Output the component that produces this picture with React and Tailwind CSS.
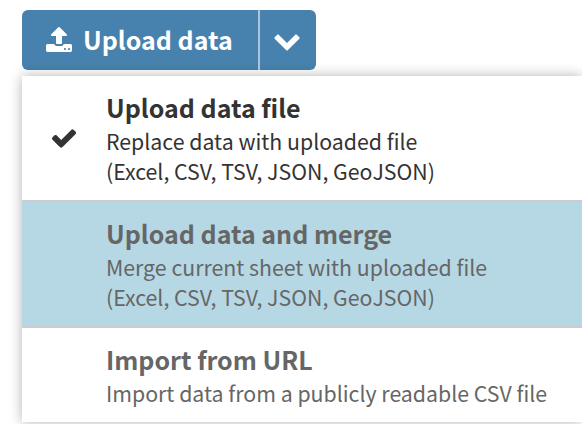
const items = [
  {
    title: "Upload data file",
    lines: ["Replace data with uploaded file", "(Excel, CSV, TSV, JSON, GeoJSON)"],
    selected: true,
  },
  {
    title: "Upload data and merge",
    lines: ["Merge current sheet with uploaded file", "(Excel, CSV, TSV, JSON, GeoJSON)"],
    hovered: true,
  },
  {
    title: "Import from URL",
    lines: ["Import data from a publicly readable CSV file"],
  },
];

function Icon({ d, className }) {
  return (
    <svg
      xmlns="http://www.w3.org/2000/svg"
      className={`size-7 shrink-0 ${className}`}
      viewBox="0 0 1792 1792"
      fill="currentColor"
      aria-hidden="true"
    >
      <path d={d} />
    </svg>
  );
}

const uploadPath =
  "M1280 1472q0-26-19-45t-45-19-45 19-19 45 19 45 45 19 45-19 19-45zm256 0q0-26-19-45t-45-19-45 19-19 45 19 45 45 19 45-19 19-45zm128-224v320q0 40-28 68t-68 28h-1472q-40 0-68-28t-28-68v-320q0-40 28-68t68-28h427q21 56 70.5 92t110.5 36h256q61 0 110.5-36t70.5-92h427q40 0 68 28t28 68zm-325-648q-17 40-59 40h-256v448q0 26-19 45t-45 19h-256q-26 0-45-19t-19-45v-448h-256q-42 0-59-40-17-39 14-69l448-448q18-19 45-19t45 19l448 448q31 30 14 69z";
const chevronPath =
  "M1683 808l-742 741q-19 19-45 19t-45-19l-742-741q-19-19-19-45.5t19-45.5l166-165q19-19 45-19t45 19l531 531 531-531q19-19 45-19t45 19l166 165q19 19 19 45.5t-19 45.5z";
const checkPath =
  "M1671 566q0 40-28 68l-724 724-136 136q-28 28-68 28t-68-28l-136-136-362-362q-28-28-28-68t28-68l136-136q28-28 68-28t68 28l294 295 656-657q28-28 68-28t68 28l136 136q28 28 28 68z";

function MenuItem({ item }) {
  return (
    <li
      className={`flex items-center border-[#cccccc] pt-3 pb-3.5 not-last:border-b-2 ${
        item.hovered ? "bg-[#b6d7e4]" : "bg-white"
      } ${item.selected ? "text-[#333333]" : "text-[#666666]"}`}
    >
      <div className="flex w-[84px] shrink-0 pl-7">
        {item.selected && <Icon d={checkPath} className="mt-0.5" />}
      </div>
      <div className="whitespace-nowrap">
        <div className="text-[25px] leading-[38px] font-bold">{item.title}</div>
        {item.lines.map((line) => (
          <div key={line} className="text-[21.3px] leading-[30px]">
            {line}
          </div>
        ))}
      </div>
    </li>
  );
}

export default function App() {
  return (
    <div className="h-[424px] w-[582px] overflow-hidden bg-white pt-2.5 pl-[22px] font-['Noto_Sans_CJK_SC',sans-serif]">
      <div className="flex h-[60px] w-[294px] overflow-hidden rounded-md bg-[#4682ad] text-white">
        <button type="button" className="flex w-[236px] items-center pl-6 whitespace-nowrap">
          <Icon d={uploadPath} className="" />
          <span className="-mt-0.5 ml-[9px] text-[25px] leading-[34px] font-bold">Upload data</span>
        </button>
        <button
          type="button"
          aria-label="More upload options"
          className="flex flex-1 items-center border-l-2 border-[#a9c6da] pl-[13px]"
        >
          <Icon d={chevronPath} className="" />
        </button>
      </div>

      <ul className="mt-1.5 w-[560px] shadow-[0_0_12px_rgba(0,0,0,0.3)]">
        {items.map((item) => (
          <MenuItem key={item.title} item={item} />
        ))}
      </ul>
    </div>
  );
}
